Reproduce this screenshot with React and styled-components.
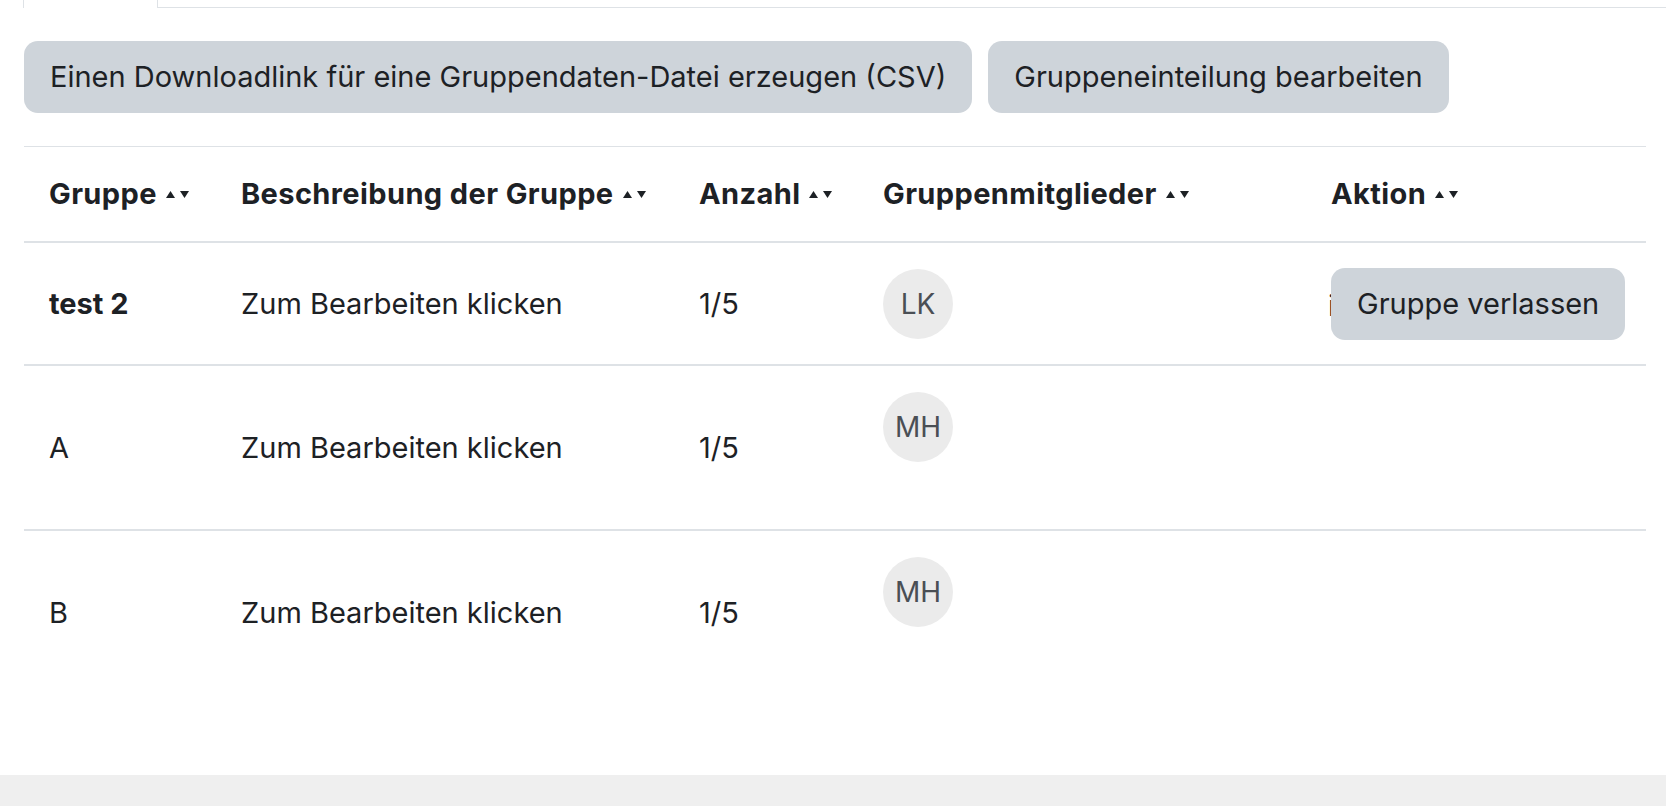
import React from 'react';
import styled, { createGlobalStyle } from 'styled-components';

const GlobalStyle = createGlobalStyle`
  html, body {
    margin: 0;
    padding: 0;
    background: #fff;
  }
  body {
    font-family: Inter, "Noto Sans", "Liberation Sans", sans-serif;
    color: #1d2125;
  }
`;

const Page = styled.div`
  min-height: 806px;
  display: flex;
  flex-direction: column;
`;

const Main = styled.div`
  flex: 1;
  padding: 0 0 0 23px;
`;

const Tabs = styled.div`
  display: flex;
  height: 8px;
`;

const ActiveTab = styled.div`
  width: 133px;
  border: 1px solid #dee2e6;
  border-top: none;
  border-bottom: none;
`;

const TabRest = styled.div`
  flex: 1;
  border-bottom: 1px solid #dee2e6;
`;

const Toolbar = styled.div`
  display: flex;
  gap: 16px;
  margin-top: 33px;
  padding-left: 1px;
`;

const Button = styled.button`
  height: 72px;
  padding: 0 26px;
  border: none;
  border-radius: 14px;
  background: #ced4da;
  color: #1d2125;
  font-family: inherit;
  font-size: 29px;
  line-height: 1.5;
  white-space: nowrap;
  cursor: pointer;
`;

const Table = styled.table`
  margin-top: 33px;
  margin-left: 1px;
  width: 1622px;
  table-layout: fixed;
  border-collapse: collapse;
  font-size: 29px;
  line-height: 1.5;
`;

const Th = styled.th`
  text-align: left;
  font-weight: 700;
  letter-spacing: 0.4px;
  padding: 0 25px;
  height: 94px;
  vertical-align: middle;
  border-top: 1px solid #dee2e6;
  border-bottom: 2px solid #dee2e6;
  white-space: nowrap;
`;

const Td = styled.td`
  padding: 0 25px;
  height: ${p => p.$h}px;
  vertical-align: ${p => p.$top ? 'top' : 'middle'};
  padding-top: ${p => p.$top ? 26 : 0}px;
  font-weight: ${p => p.$bold ? 700 : 400};
  border-bottom: ${p => p.$last ? 'none' : '2px solid #dee2e6'};
  box-sizing: border-box;
  white-space: nowrap;
`;

const SortIcon = styled.svg`
  margin-left: 9px;
  vertical-align: middle;
  position: relative;
  top: -2px;
`;

const Avatar = styled.span`
  display: inline-flex;
  align-items: center;
  justify-content: center;
  width: 70px;
  height: 70px;
  border-radius: 50%;
  background: #ebebeb;
  color: #4a4f55;
  font-size: 28px;
`;

const Stub = styled.span`
  display: inline-block;
  width: 0;
  margin-left: -3px;
  margin-right: 3px;
  vertical-align: middle;
  color: #1d2125;
`;

const Footer = styled.div`
  height: 31px;
  background: #efefef;
`;

function Sort() {
  return (
    <SortIcon width="24" height="9" viewBox="0 0 24 9">
      <polygon points="0,8 4.5,1 9,8" fill="#1d2125" />
      <polygon points="14,1 23,1 18.5,8" fill="#1d2125" />
    </SortIcon>
  );
}

const rows = [
  { name: 'test 2', bold: true, count: '1/5', member: 'LK', h: 123, leave: true },
  { name: 'A', count: '1/5', member: 'MH', h: 165 },
  { name: 'B', count: '1/5', member: 'MH', h: 165, last: true },
];

export default function App() {
  return (
    <Page>
      <GlobalStyle />
      <Main>
        <Tabs>
          <ActiveTab />
          <TabRest />
        </Tabs>
        <Toolbar>
          <Button>Einen Downloadlink für eine Gruppendaten-Datei erzeugen (CSV)</Button>
          <Button>Gruppeneinteilung bearbeiten</Button>
        </Toolbar>
        <Table>
          <colgroup>
            <col style={{ width: 192 }} />
            <col style={{ width: 458 }} />
            <col style={{ width: 184 }} />
            <col style={{ width: 448 }} />
            <col style={{ width: 340 }} />
          </colgroup>
          <thead>
            <tr>
              <Th>Gruppe<Sort /></Th>
              <Th>Beschreibung der Gruppe<Sort /></Th>
              <Th>Anzahl<Sort /></Th>
              <Th>Gruppenmitglieder<Sort /></Th>
              <Th>Aktion<Sort /></Th>
            </tr>
          </thead>
          <tbody>
            {rows.map(r => (
              <tr key={r.name}>
                <Td $h={r.h} $bold={r.bold} $last={r.last}>{r.name}</Td>
                <Td $h={r.h} $last={r.last}>Zum Bearbeiten klicken</Td>
                <Td $h={r.h} $last={r.last}>{r.count}</Td>
                <Td $h={r.h} $last={r.last} $top={!r.leave}>
                  <Avatar>{r.member}</Avatar>
                </Td>
                <Td $h={r.h} $last={r.last}>
                  {r.leave && (
                    <>
                      <Stub>i</Stub>
                      <Button>Gruppe verlassen</Button>
                    </>
                  )}
                </Td>
              </tr>
            ))}
          </tbody>
        </Table>
      </Main>
      <Footer />
    </Page>
  );
}
